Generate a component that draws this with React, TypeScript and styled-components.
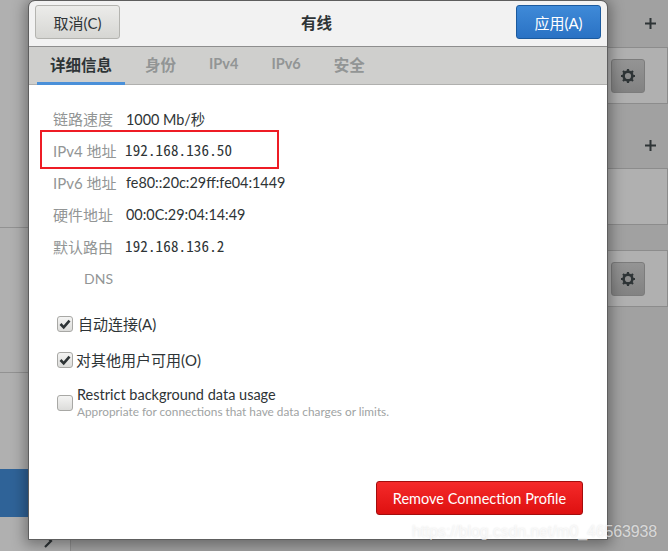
import styled, { createGlobalStyle } from "styled-components";

const UI_FONT = `Lato, "Noto Sans CJK SC", sans-serif`;
const CJK_FONT = `"Noto Sans CJK SC", sans-serif`;

const details = [
	{ label: "链路速度", value: "1000 Mb/秒" },
	{ label: "IPv4 地址", value: "192.168.136.50", halfWidth: true },
	{ label: "IPv6 地址", value: "fe80::20c:29ff:fe04:1449" },
	{ label: "硬件地址", value: "00:0C:29:04:14:49" },
	{ label: "默认路由", value: "192.168.136.2", halfWidth: true },
	{ label: "DNS", value: "", latin: true },
];

const tabs = [
	{ title: "详细信息" },
	{ title: "身份" },
	{ title: "IPv4", latin: true },
	{ title: "IPv6", latin: true },
	{ title: "安全" },
];

function Gear() {
	return (
		<svg width="16" height="16" viewBox="0 0 16 16">
			<circle cx="8" cy="8" r="4.4" fill="none" stroke="#2e3436" strokeWidth="2.6" />
			<path
				d="M8 1v3M8 12v3M1 8h3M12 8h3M3 3l2 2M11 11l2 2M13 3l-2 2M5 11l-2 2"
				stroke="#2e3436"
				strokeWidth="2.2"
				fill="none"
			/>
		</svg>
	);
}

function Check() {
	return (
		<svg width="12" height="12" viewBox="0 0 12 12">
			<path d="M1.5 6l3.2 3.4L10.5 2.6" fill="none" stroke="#2e3436" strokeWidth="2.6" />
		</svg>
	);
}

function PlusIcon() {
	return (
		<svg width="11" height="11" viewBox="0 0 11 11">
			<path d="M5.5 0v11M0 5.5h11" stroke="#2e3436" strokeWidth="2" fill="none" />
		</svg>
	);
}

export default function App() {
	return (
		<>
			<GlobalStyle />
			<Page>
				<LeftSide>
					<LeftCell $height={228} />
					<LeftCell $height={145} />
					<LeftCell $height={96} $plain />
					<SelectedRow />
					<Chevron>
						<svg width="10" height="14" viewBox="0 0 10 14">
							<path d="M2 1l6 6-6 6" fill="none" stroke="#2e3436" strokeWidth="2.2" />
						</svg>
					</Chevron>
				</LeftSide>
				<RightSide>
					<PlusRow $height={47}>
						<PlusIcon />
					</PlusRow>
					<Panel>
						<GearButton>
							<Gear />
						</GearButton>
					</Panel>
					<PlusRow $height={64} $offset={18}>
						<PlusIcon />
					</PlusRow>
					<Panel />
					<Spacer />
					<Panel>
						<GearButton>
							<Gear />
						</GearButton>
					</Panel>
				</RightSide>

				<Dialog>
					<Header>
						<CancelButton>取消(C)</CancelButton>
						<Title>有线</Title>
						<ApplyButton>应用(A)</ApplyButton>
					</Header>
					<TabBar>
						{tabs.map((t, i) => (
							<Tab key={t.title} $active={i === 0} $latin={t.latin}>
								{t.title}
							</Tab>
						))}
					</TabBar>
					<Body>
						<Details>
							{details.map((d) => (
								<DetailRow key={d.label}>
									<DetailLabel $latin={d.latin}>{d.label}</DetailLabel>
									<DetailValue $halfWidth={d.halfWidth}>{d.value}</DetailValue>
								</DetailRow>
							))}
						</Details>
						<Options>
							<Option>
								<CheckBox>
									<Check />
								</CheckBox>
								<OptionText $gap={5}>自动连接(A)</OptionText>
							</Option>
							<Option>
								<CheckBox>
									<Check />
								</CheckBox>
								<OptionText $gap={3}>对其他用户可用(O)</OptionText>
							</Option>
							<RestrictOption>
								<CheckBox />
								<OptionStack>
									<OptionText $gap={4} $latin>
										Restrict background data usage
									</OptionText>
									<OptionHint>Appropriate for connections that have data charges or limits.</OptionHint>
								</OptionStack>
							</RestrictOption>
						</Options>
						<Footer>
							<RemoveButton>Remove Connection Profile</RemoveButton>
						</Footer>
					</Body>
				</Dialog>

				<Highlight />
				<Watermark>https://blog.csdn.net/m0_46563938</Watermark>
			</Page>
		</>
	);
}

const GlobalStyle = createGlobalStyle`
	html, body {
		margin: 0;
		padding: 0;
		background: #a0a0a0;
	}
`;

const Page = styled.div`
	position: relative;
	width: 668px;
	height: 551px;
	overflow: hidden;
	display: flex;
	justify-content: space-between;
	background: #a1a1a1;
	font-family: ${UI_FONT};
`;

const LeftSide = styled.div`
	width: 71px;
	box-sizing: border-box;
	display: flex;
	flex-direction: column;
	border-right: 1px solid #8f8f8f;
`;

const LeftCell = styled.div<{ $height: number; $plain?: boolean }>`
	height: ${(p) => p.$height}px;
	flex: none;
	box-sizing: border-box;
	background: #b0b0b0;
	border-bottom: ${(p) => (p.$plain ? "none" : "1px solid #929292")};
`;

const SelectedRow = styled.div`
	height: 48px;
	flex: none;
	background: #2f6398;
`;

const Chevron = styled.div`
	flex: 1;
	display: flex;
	justify-content: flex-end;
	align-items: flex-end;
	padding: 0 17px 3px 0;
	background: #b0b0b0;
`;

const RightSide = styled.div`
	width: 62px;
	display: flex;
	flex-direction: column;
`;

const PlusRow = styled.div<{ $height: number; $offset?: number }>`
	height: ${(p) => p.$height}px;
	flex: none;
	box-sizing: border-box;
	display: flex;
	align-items: center;
	justify-content: flex-end;
	padding: ${(p) => p.$offset ?? 0}px 12px 0 0;
`;

const Panel = styled.div`
	height: 57px;
	flex: none;
	box-sizing: border-box;
	background: #b0b0b0;
	border: 1px solid #8c8c8c;
	border-left: none;
	display: flex;
	align-items: center;
	padding-left: 5px;
`;

const Spacer = styled.div`
	height: 25px;
	flex: none;
`;

const GearButton = styled.div`
	width: 34px;
	height: 34px;
	box-sizing: border-box;
	border: 1px solid #7c7c7c;
	border-radius: 3px;
	background: linear-gradient(#949494, #828282);
	display: flex;
	align-items: center;
	justify-content: center;
`;

const Dialog = styled.div`
	position: absolute;
	left: 29px;
	top: 1px;
	width: 578px;
	height: 538px;
	display: flex;
	flex-direction: column;
	background: #fff;
	border-radius: 6px 6px 0 0;
	outline: 1px solid #5e5e5e;
	box-shadow: 0 2px 14px 4px rgba(0, 0, 0, 0.35);
`;

const Header = styled.div`
	height: 46px;
	flex: none;
	display: flex;
	align-items: center;
	justify-content: space-between;
	padding: 0 6px 3px 6px;
	box-sizing: border-box;
	background: #f2f2f2;
	border-radius: 6px 6px 0 0;
	border-bottom: 1px solid #8e8e8e;
`;

const HeaderButton = styled.div`
	width: 85px;
	height: 34px;
	box-sizing: border-box;
	border-radius: 3px;
	display: flex;
	align-items: center;
	justify-content: center;
	font-size: 15px;
`;

const CancelButton = styled(HeaderButton)`
	border: 1px solid #b4b4b0;
	background: linear-gradient(#ececea, #d6d6d3);
	color: #2e3436;
`;

const ApplyButton = styled(HeaderButton)`
	border: 1px solid #1b5a9e;
	background: linear-gradient(#3f8ad8, #2a72c4);
	color: #fff;
`;

const Title = styled.div`
	margin: 0 3px 1px 0;
	font-size: 15.5px;
	font-weight: 700;
	color: #2e3436;
`;

const TabBar = styled.div`
	height: 38px;
	flex: none;
	box-sizing: border-box;
	display: flex;
	padding-left: 8px;
	background: #cfcfcd;
	border-bottom: 1px solid #b0b0ae;
`;

const Tab = styled.div<{ $active?: boolean; $latin?: boolean }>`
	height: 38px;
	box-sizing: border-box;
	padding: 0 13px 2px;
	margin-right: 7px;
	display: flex;
	align-items: center;
	font-size: ${(p) => (p.$latin ? 14.5 : 15.5)}px;
	font-weight: 700;
	color: ${(p) => (p.$active ? "#2e3436" : "#929595")};
	border-bottom: 3px solid ${(p) => (p.$active ? "#4a90d9" : "transparent")};
`;

const Body = styled.div`
	flex: 1;
	display: flex;
	flex-direction: column;
	padding: 21px 24px 24px 24px;
	background: #fff;
`;

const Details = styled.div`
	display: flex;
	flex-direction: column;
	gap: 8px;
`;

const DetailRow = styled.div`
	height: 24px;
	display: flex;
	align-items: center;
	font-size: 15px;
`;

const DetailLabel = styled.div<{ $latin?: boolean }>`
	width: 60px;
	text-align: right;
	font-size: ${(p) => (p.$latin ? 14 : 15)}px;
	color: #929595;
	white-space: nowrap;
`;

const DetailValue = styled.div<{ $halfWidth?: boolean }>`
	margin-left: ${(p) => (p.$halfWidth ? 12 : 13)}px;
	font-size: 14.4px;
	color: #2e3436;
	white-space: nowrap;
	${(p) =>
		p.$halfWidth &&
		`
		margin-top: -2px;
		font-family: ${CJK_FONT};
		font-size: 15px;
		font-feature-settings: "hwid";
		letter-spacing: 0.15px;
	`}
`;

const Options = styled.div`
	margin-top: 22px;
	margin-left: 4px;
	display: flex;
	flex-direction: column;
	gap: 12px;
`;

const Option = styled.div`
	min-height: 24px;
	display: flex;
	align-items: center;
`;

const RestrictOption = styled(Option)`
	margin-top: 2px;
`;

const CheckBox = styled.div`
	width: 16px;
	height: 16px;
	flex: none;
	box-sizing: border-box;
	border: 1px solid #a8a8a5;
	border-radius: 3px;
	background: linear-gradient(#f4f4f3, #dcdcda);
	display: flex;
	align-items: center;
	justify-content: center;
`;

const OptionStack = styled.div`
	display: flex;
	flex-direction: column;
`;

const OptionText = styled.div<{ $gap: number; $latin?: boolean }>`
	margin-left: ${(p) => p.$gap}px;
	font-size: ${(p) => (p.$latin ? 14.5 : 15)}px;
	line-height: 18px;
	color: #2e3436;
`;

const OptionHint = styled.div`
	margin-left: 4px;
	font-size: 11.8px;
	line-height: 15px;
	color: #a0a3a3;
`;

const Footer = styled.div`
	margin-top: auto;
	display: flex;
	justify-content: flex-end;
`;

const RemoveButton = styled.div`
	width: 207px;
	height: 34px;
	box-sizing: border-box;
	border: 1px solid #a30d0d;
	border-radius: 3px;
	background: linear-gradient(#f52a2a, #de1010);
	color: #fff;
	font-size: 14.5px;
	display: flex;
	align-items: center;
	justify-content: center;
`;

const Highlight = styled.div`
	position: absolute;
	left: 40px;
	top: 130px;
	width: 239px;
	height: 39px;
	box-sizing: border-box;
	border: 2px solid #ee1c25;
`;

const Watermark = styled.div`
	position: absolute;
	left: 412px;
	top: 523px;
	font-family: "Liberation Sans", sans-serif;
	font-size: 16px;
	letter-spacing: -0.15px;
	color: rgba(255, 255, 255, 0.65);
	text-shadow: 0 0 2px rgba(0, 0, 0, 0.12);
	white-space: nowrap;
`;
